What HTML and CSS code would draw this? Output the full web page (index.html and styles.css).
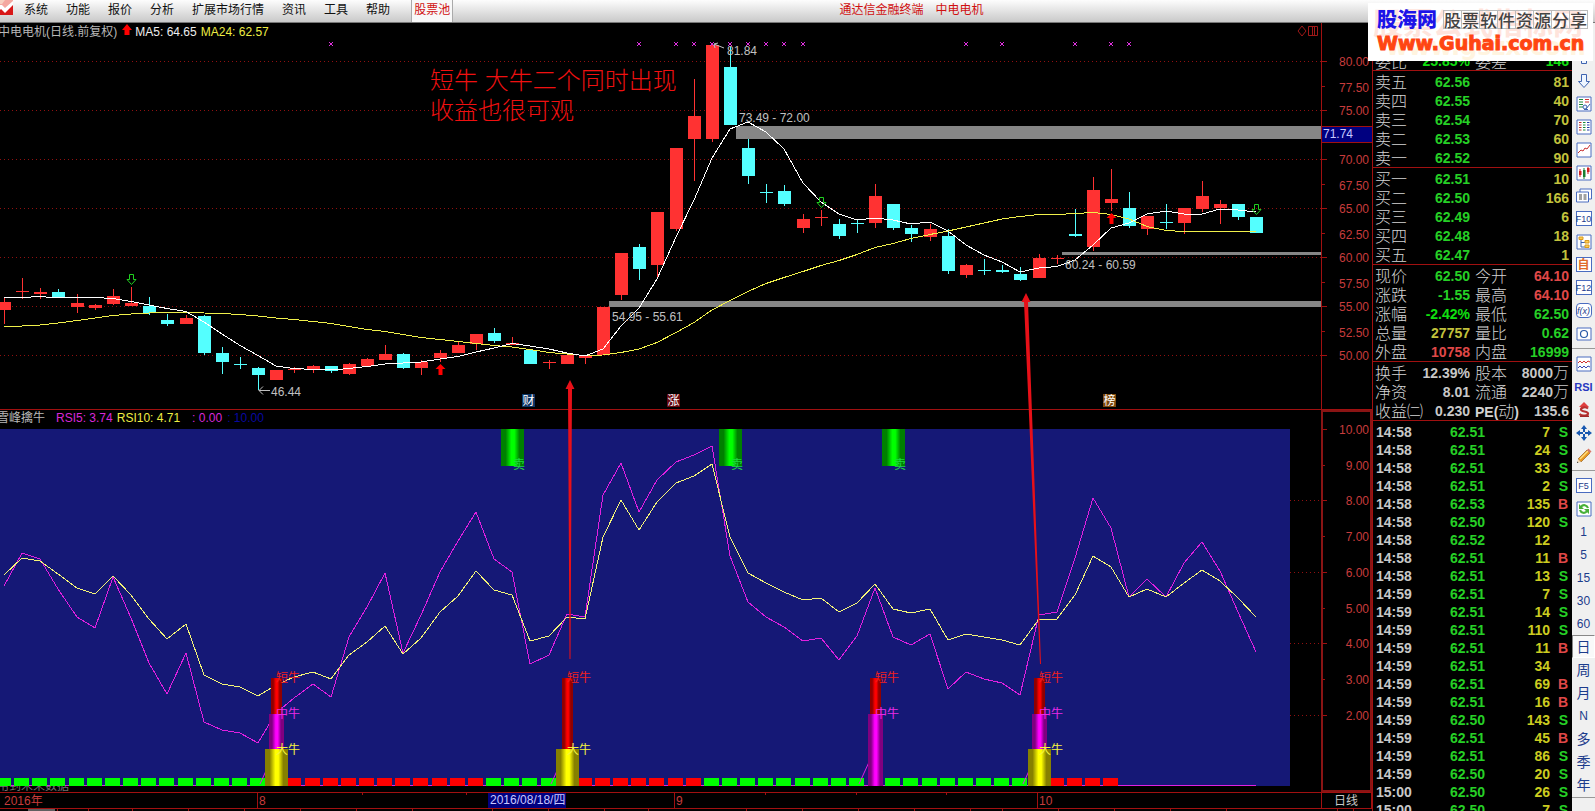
FILE: index.html
```html
<!DOCTYPE html>
<html lang="zh-CN">
<head>
<meta charset="utf-8">
<title>通达信金融终端 中电电机</title>
<link rel="stylesheet" href="styles.css">
</head>
<body>
<header class="topbar">
  <svg class="logo" viewBox="0 0 13 16" aria-hidden="true"><path fill="#d81818" d="M0 0h13v15H0z"/><path fill="#f4a8a0" d="M0 0h13v3L5 10 2 7 0 8z"/><path fill="#fff" d="M0 5l2 0 3 3 8-7v4L5 13 1 9 0 10z"/><path fill="#f7d0c0" d="M0 0h5L2 4H0z"/></svg>
  <nav class="menu">
    <a href="#">系统</a><a href="#">功能</a><a href="#">报价</a><a href="#">分析</a><a href="#">扩展市场行情</a><a href="#">资讯</a><a href="#">工具</a><a href="#">帮助</a><a href="#" class="pool">股票池</a>
  </nav>
  <h1 class="app-title"><span>通达信金融终端</span><span>中电电机</span></h1>
  <aside class="banner">
    <span class="banner-ghost">股票公式指标网</span>
    <span class="banner-ghost-url">www.gszx.com</span>
    <div class="banner-row"><b class="banner-name">股海网</b><span class="banner-tag"><i>股</i><i>票</i><i>软</i><i>件</i><i>资</i><i>源</i><i>分</i><i>享</i></span></div>
    <div class="banner-url">Www.Guhai.com.cn</div>
  </aside>
</header>
<main class="workspace">
  <section class="charts">
    <div class="legend">
      <span class="legend-name">中电电机(日线.前复权)</span>
      <svg class="legend-arrow" viewBox="0 0 10 12" aria-hidden="true"><path fill="#f00" d="M5 0l5 6H7.500v5h-5V6H0z"/></svg>
      <span class="white">MA5: 64.65</span><span class="yellow">MA24: 62.57</span>
      <svg class="legend-tools" viewBox="0 0 22 12" aria-hidden="true"><path fill="none" stroke="#a01818" d="M5 1l4 5-4 5-4-5zM11.500 1.500h9v9h-9zM15.500 1.500v9M17.500 1.500v9"/></svg>
      <span class="axis-cap"></span>
    </div>
    <svg id="price" class="plot" viewBox="0 41 1372 368" role="img" aria-label="日线"></svg>
    <div class="legend lower">
      <span class="legend-name clipped">雪峰擒牛</span>
      <span class="magenta">RSI5: 3.74</span><span class="yellow">RSI10: 4.71</span><span class="magenta zero">: 0.00</span><span class="navy">: 10.00</span>
      <span class="axis-cap strong"></span>
    </div>
    <svg id="rsi" class="plot" viewBox="0 429 1372 363" role="img" aria-label="雪峰擒牛"></svg>
    <svg id="dates" class="plot" viewBox="0 792 1372 19" role="img" aria-label="日期"></svg>
  </section>

  <section class="quotes">
    <table class="quote first"><colgroup><col class="c1"><col class="c2"><col class="c3"><col></colgroup>
      <tr><th>委比</th><td class="up">25.85%</td><th>委差</th><td class="up">146</td></tr>
    </table>
    <table class="quote"><colgroup><col class="c1"><col class="c2"><col class="c3"><col></colgroup>
      <tr><th>卖五</th><td class="dn">62.56</td><td></td><td class="vol">81</td></tr>
      <tr><th>卖四</th><td class="dn">62.55</td><td></td><td class="vol">40</td></tr>
      <tr><th>卖三</th><td class="dn">62.54</td><td></td><td class="vol">70</td></tr>
      <tr><th>卖二</th><td class="dn">62.53</td><td></td><td class="vol">60</td></tr>
      <tr><th>卖一</th><td class="dn">62.52</td><td></td><td class="vol">90</td></tr>
    </table>
    <table class="quote"><colgroup><col class="c1"><col class="c2"><col class="c3"><col></colgroup>
      <tr><th>买一</th><td class="dn">62.51</td><td></td><td class="vol">10</td></tr>
      <tr><th>买二</th><td class="dn">62.50</td><td></td><td class="vol">166</td></tr>
      <tr><th>买三</th><td class="dn">62.49</td><td></td><td class="vol">6</td></tr>
      <tr><th>买四</th><td class="dn">62.48</td><td></td><td class="vol">18</td></tr>
      <tr><th>买五</th><td class="dn">62.47</td><td></td><td class="vol">1</td></tr>
    </table>
    <table class="quote"><colgroup><col class="c1"><col class="c2"><col class="c3"><col></colgroup>
      <tr><th>现价</th><td class="dn">62.50</td><th>今开</th><td class="hot">64.10</td></tr>
      <tr><th>涨跌</th><td class="dn">-1.55</td><th>最高</th><td class="hot">64.10</td></tr>
      <tr><th>涨幅</th><td class="up">-2.42%</td><th>最低</th><td class="dn">62.50</td></tr>
      <tr><th>总量</th><td class="vol">27757</td><th>量比</th><td class="dn">0.62</td></tr>
      <tr><th>外盘</th><td class="hot">10758</td><th>内盘</th><td class="dn">16999</td></tr>
    </table>
    <table class="quote"><colgroup><col class="c1"><col class="c2"><col class="c3"><col></colgroup>
      <tr><th>换手</th><td>12.39%</td><th>股本</th><td>8000<span class="unit">万</span></td></tr>
      <tr><th>净资</th><td>8.01</td><th>流通</th><td>2240<span class="unit">万</span></td></tr>
      <tr><th>收益㈡</th><td>0.230</td><th><b>PE(</b>动<b>)</b></th><td>135.6</td></tr>
    </table>
    <table class="ticks"><colgroup><col class="t1"><col class="t2"><col class="t3"><col></colgroup>
      <tr><td>14:58</td><td>62.51</td><td>7</td><td class="s">S</td></tr>
      <tr><td>14:58</td><td>62.51</td><td>24</td><td class="s">S</td></tr>
      <tr><td>14:58</td><td>62.51</td><td>33</td><td class="s">S</td></tr>
      <tr><td>14:58</td><td>62.51</td><td>2</td><td class="s">S</td></tr>
      <tr><td>14:58</td><td>62.53</td><td>135</td><td class="b">B</td></tr>
      <tr><td>14:58</td><td>62.50</td><td>120</td><td class="s">S</td></tr>
      <tr><td>14:58</td><td>62.52</td><td>12</td><td></td></tr>
      <tr><td>14:58</td><td>62.51</td><td>11</td><td class="b">B</td></tr>
      <tr><td>14:58</td><td>62.51</td><td>13</td><td class="s">S</td></tr>
      <tr><td>14:59</td><td>62.51</td><td>7</td><td class="s">S</td></tr>
      <tr><td>14:59</td><td>62.51</td><td>14</td><td class="s">S</td></tr>
      <tr><td>14:59</td><td>62.51</td><td>110</td><td class="s">S</td></tr>
      <tr><td>14:59</td><td>62.51</td><td>11</td><td class="b">B</td></tr>
      <tr><td>14:59</td><td>62.51</td><td>34</td><td></td></tr>
      <tr><td>14:59</td><td>62.51</td><td>69</td><td class="b">B</td></tr>
      <tr><td>14:59</td><td>62.51</td><td>16</td><td class="b">B</td></tr>
      <tr><td>14:59</td><td>62.50</td><td>143</td><td class="s">S</td></tr>
      <tr><td>14:59</td><td>62.51</td><td>45</td><td class="b">B</td></tr>
      <tr><td>14:59</td><td>62.51</td><td>86</td><td class="s">S</td></tr>
      <tr><td>14:59</td><td>62.50</td><td>20</td><td class="s">S</td></tr>
      <tr><td>15:00</td><td>62.50</td><td>26</td><td class="s">S</td></tr>
      <tr><td>15:00</td><td>62.50</td><td>7</td><td class="s">S</td></tr>
    </table>
  </section>

  <nav class="tools">
    <button aria-label="上移"><svg viewBox="0 0 16 16"><path class="ol" d="M8 1.500l5.500 6H10.500v6h-5v-6H2.500z"/></svg></button>
    <button aria-label="下移"><svg viewBox="0 0 16 16"><path class="ol" d="M8 14.500l5.500-6H10.500v-7h-5v7H2.500z"/></svg></button>
    <button aria-label="自选"><svg viewBox="0 0 16 16"><path class="fr" d="M1 1h14v14H1z"/><path stroke="#1a8a3a" d="M3 3.500h4M3 6h4M3 8.500h4M3 11h4"/><path stroke="#d03030" d="M9 3.500h4M9 6h4"/><circle class="ol" cx="9" cy="11" r="2"/><path class="ol" d="M10 13l4-5M8 13.500h4"/></svg></button>
    <button aria-label="行情"><svg viewBox="0 0 16 16"><path class="fr" d="M1 1h14v14H1z"/><path stroke="#c02828" d="M3 3.500h2.500M3 6h2.500M3 8.500h2.500M3 11h2.500"/><path stroke="#188838" d="M7 3.500h2.500M7 6h2.500M7 8.500h2.500M7 11h2.500"/><path stroke="#2438a8" d="M11 3.500h2.500M11 6h2.500M11 8.500h2.500M11 11h2.500"/></svg></button>
    <button aria-label="分时"><svg viewBox="0 0 16 16"><path class="fr" d="M1 1h14v14H1z"/><path fill="none" stroke="#c83030" d="M2 11l3-3 2 1 2-3 2 1 3-4"/></svg></button>
    <button aria-label="K线"><svg viewBox="0 0 16 16"><path class="fr" d="M1 1h14v14H1z"/><path stroke="#d02020" d="M4 4v8M12 2v7"/><path stroke="#188030" d="M8 3v11"/><path fill="#d02020" d="M3 6h2.500v4H3zM11 3h2.500v4H11z"/><path fill="#188030" d="M7 5h2.500v7H7z"/></svg></button>
    <button aria-label="多窗口"><svg viewBox="0 0 16 16"><path class="fr" d="M4 1h11.500v10H4z"/><path class="fr" d="M.5 4h12v10H.5z"/><path stroke="#444" d="M3 7h3M7.500 7h3M3 9h3M7.500 9h3M3 11h3M7.500 11h3"/></svg></button>
    <button class="boxed">F10</button>
    <button aria-label="结构"><svg viewBox="0 0 16 16"><path class="fr" d="M1 1h14v14H1z"/><path fill="none" stroke="#3f64b0" d="M5 5v8h4M5 8.500h4"/><path fill="#ffd050" stroke="#d89820" d="M3 3h4v2.500H3zM9 6.500h4V9H9zM9 11h4v2.500H9z"/></svg></button>
    <button class="boxed orange">自</button>
    <button class="boxed">F12</button>
    <button class="boxed round"><i>f(x)</i></button>
    <button aria-label="画圈"><svg viewBox="0 0 16 16"><path class="fr" d="M1 2h14v12H1z"/><circle cx="8" cy="8" r="3.500" fill="none" stroke="#2858a8" stroke-width="1.200"/></svg></button>
    <hr>
    <button aria-label="指标"><svg viewBox="0 0 16 16"><path class="fr" d="M1 1h14v14H1z"/><path fill="none" stroke="#d03030" d="M2 7l2-2 2 2 2-2 2 2 2-2 2 1"/><path fill="none" stroke="#3848b8" d="M2 12l2-2 2 2 2-2 2 2 2-2 2 1"/></svg></button>
    <button class="rsi">RSI</button>
    <button aria-label="除权"><svg viewBox="0 0 16 16"><path fill="#e04040" d="M8 0l5 5H3z"/><path fill="none" stroke="#b83030" stroke-width="2.200" d="M12 6.500C10 4.500 5 5 5 7.500s7 1.500 7 4-6 3-8.500.5"/><path fill="#a02828" d="M4 13.500h9V15H4z"/></svg></button>
    <button aria-label="移动"><svg viewBox="0 0 16 16"><path fill="#1858b0" d="M8 0l3 4H9v3h3V5l4 3-4 3V9H9v3h2l-3 4-3-4h2V9H4v2L0 8l4-3v2h3V4H5z"/><path fill="#f0f0f0" d="M7 7h2v2H7z"/></svg></button>
    <button aria-label="画线"><svg viewBox="0 0 16 16"><path fill="#e89820" stroke="#8a5010" stroke-width=".6" d="M2 11L11 2l3 3-9 9z"/><path stroke="#ffe080" stroke-width="1.500" d="M4 11l8-8"/><path fill="#f4d8b0" d="M2 11l3 3-4 1z"/><path fill="#333" d="M1 13.500l1.500 1L1 15z"/><path fill="#d87868" d="M11 2l1.500-1.500 3 3L14 5z"/></svg></button>
    <hr>
    <button class="boxed">F5</button>
    <button aria-label="刷新"><svg viewBox="0 0 16 16"><path class="fr" d="M1 1h14v14H1z"/><path fill="none" stroke="#48b038" stroke-width="2.200" d="M12 7c-1-3-5-4-7-1M4 9c1 3 5 4 7 1"/><path fill="#48b038" d="M3 3v5h5zM13 13V8H8z"/></svg></button>
    <button>1</button><button>5</button><button>15</button><button>30</button><button>60</button>
    <button class="period on">日</button><button class="period">周</button><button class="period">月</button><button>N</button><button class="period">多</button><button class="period">季</button><button class="period">年</button>
    <hr class="end">
  </nav>
</main>
<script src="chart.js"></script>
</body>
</html>
```

FILE: styles.css
```css
* { box-sizing: border-box; }
body {
  margin: 0;
  height: 100vh;
  overflow: hidden;
  display: flex;
  flex-direction: column;
  background: #000;
  color: #c8c8c8;
  font: 12px/16px "Liberation Sans", "Noto Sans CJK SC", sans-serif;
}
.topbar {
  position: relative;
  flex: none;
  display: flex;
  height: 23px;
  padding-right: 225px;
  background: linear-gradient(#fdfdfd, #c9c9c9);
  border-bottom: 1px solid #777;
}
.logo { width: 13px; height: 16px; }
.menu { display: flex; gap: 18px; padding-left: 11px; line-height: 20px; }
.menu a { color: #111; text-decoration: none; }
.menu .pool {
  margin-left: 3px;
  padding: 0 2px;
  border: solid #aaa;
  border-width: 0 1px;
  background: #f8f8f8;
  color: #d01010;
}
.app-title {
  flex: 1;
  display: flex;
  justify-content: center;
  gap: 12px;
  margin: 0;
  font-size: 12px;
  font-weight: 400;
  line-height: 20px;
  color: #d01010;
}
.banner {
  position: absolute;
  z-index: 2;
  top: 3px;
  right: 2px;
  width: 225px;
  height: 58px;
  padding: 4px 4px 0 9px;
  overflow: hidden;
  background: #fff;
}
.banner-ghost, .banner-ghost-url { position: absolute; left: 5px; font-weight: 700; white-space: nowrap; }
.banner-ghost { top: 5px; font-size: 30px; line-height: 32px; color: #ffe4dc; }
.banner-ghost-url { top: 32px; left: 18px; font: 700 24px/24px "DejaVu Sans", sans-serif; color: #fff4e0; }
.banner-row { position: relative; display: flex; justify-content: space-between; align-items: center; height: 24px; }
.banner-name { font: 900 20px/22px "Noto Sans CJK SC", sans-serif; color: #1c14e8; }
.banner-tag { display: flex; margin-right: 1px; border: 1px solid #bbb; border-right: 0; }
.banner-tag i { width: 18px; border-right: 1px solid #bbb; font: 500 17px/17px "Noto Sans CJK SC", sans-serif; color: #444; }
.banner-url { position: relative; font: 700 19px/24px "DejaVu Sans", sans-serif; color: #ff4512; -webkit-text-stroke: 1px #ff4512; white-space: nowrap; }

.workspace { flex: 1; min-height: 0; display: grid; grid-template-columns: minmax(0, 1fr) 200px 23px; }
.charts { overflow: hidden; }
.plot { display: block; width: 100%; height: auto; font: 12px "Liberation Sans", "Noto Sans CJK SC", sans-serif; }
#rsi { overflow: visible; }
.legend { display: flex; height: 18px; white-space: nowrap; line-height: 18px; }
.lower { height: 20px; border-top: 1px solid #a01010; line-height: 16px; }
.legend-arrow { width: 10px; height: 12px; margin: 1px 3px 0 5px; }
.legend-name { margin-left: -2px; color: #b8b8b8; }
.clipped { margin: 0 11px 0 -3px; }
.white { color: #eee; }
.yellow { color: #ee4; margin-left: 4px; }
.magenta { color: #d828d8; }
.zero { margin-left: 12px; }
.navy { color: #0808a0; margin-left: 5px; }
.legend-tools { width: 22px; height: 12px; margin: 2px 2px 0 auto; }
.axis-cap { width: 51px; border-left: 1px solid #a01010; }
.lower .axis-cap { margin-left: auto; }
.strong { border: 2px solid #8a1414; border-bottom: 0; }

.quotes { overflow: hidden; border-left: 1px solid #a01010; }
.quote, .ticks { width: 100%; table-layout: fixed; border-collapse: separate; border-spacing: 0; border-top: 1px solid #a01010; padding: 1px 3px 0 2px; }
.quote.first { border-top: 0; height: 47px; padding-top: 30px; }
.quote tr { height: 19px; }
.quote th { padding: 0; font: 300 16px/19px "Noto Sans CJK SC", sans-serif; text-align: left; white-space: nowrap; color: #d4d4d4; }
.quote th b { font: 700 14px/14px "Liberation Sans", sans-serif; }
.quote th:nth-child(3) { padding-left: 5px; }
.quote td, .ticks td { padding: 0; font: 700 14px/18px "Liberation Sans", sans-serif; text-align: right; white-space: nowrap; }
.unit { font: 300 16px/14px "Noto Sans CJK SC", sans-serif; }
.quote.first tr { height: 17px; }
.quote.first th, .quote.first td { line-height: 17px; }
.c1 { width: 46px; }
.c2 { width: 49px; }
.c3 { width: 46px; }
.ticks { padding: 2px 4px 0 3px; }
.ticks tr { height: 18px; }
.ticks td:first-child { text-align: left; }
.ticks td:nth-child(2) { color: #26d026; }
.ticks td:nth-child(3) { color: #cccc20; }
.t1 { width: 50px; }
.t2 { width: 59px; }
.t3 { width: 65px; }
.up { color: #10e010; }
.dn, .ticks .s { color: #26d026; }
.vol { color: #c2c23c; }
.hot, .ticks .b { color: #e04848; }

.tools { display: flex; flex-direction: column; align-items: stretch; padding-top: 23px; overflow: hidden; background: #f0f0f0; }
.tools button {
  flex: none;
  display: flex;
  align-items: center;
  justify-content: center;
  height: 23px;
  padding: 0;
  border: 0;
  background: none;
  color: #1c3c8c;
  font: 12px/14px "Liberation Sans", "Noto Sans CJK SC", sans-serif;
}
.tools svg { width: 16px; height: 16px; fill: none; }
.tools .ol { fill: #eef6ff; stroke: #3f64b0; }
.tools .fr { fill: #fff; stroke: #4a6cc0; }
.tools .boxed { align-self: center; width: 16px; height: 15px; margin: 4px 0; border: 1px solid #4a6cc0; background: #fff; font-size: 9px; line-height: 12px; }
.tools .round { border-radius: 4px; }
.tools .orange { border-color: #4a6cc0; color: #e06828; font-size: 12px; font-weight: 700; }
.tools .rsi { font-size: 11px; font-weight: 700; color: #2838c0; }
.tools .period { font-size: 14px; }
.tools .on { border: 1px solid #fff; border-top-color: #888; border-left-color: #888; background: #f9f9f9; }
.tools hr { flex: none; width: 100%; height: 1px; margin: 3px 0; border: 0; background: #999; }
.tools .end { margin: 1px 0; }
```

FILE: chart.js
```js
const NS = "http://www.w3.org/2000/svg";
const X0 = 4.5, STEP = 18.15;
const x = i => Math.floor(X0 + STEP * i);
const RED = "#ff3232", CYAN = "#54ffff", AXIS = "#a01010", LABEL = "#c83c3c";

function add(parent, name, attrs, text) {
  const el = document.createElementNS(NS, name);
  for (const k in attrs) el.setAttribute(k, attrs[k]);
  if (text !== undefined) el.textContent = text;
  parent.appendChild(el);
  return el;
}
const rect = (p, l, t, w, h, fill) => add(p, "rect", { x: l, y: t, width: w, height: h, fill, "shape-rendering": "crispEdges" });
const text = (p, l, t, s, fill, extra) => add(p, "text", Object.assign({ x: l, y: t, fill }, extra), s);
const line = (p, values, stroke) => add(p, "polyline", {
  points: values.map((v, i) => x(i) + "," + v).join(" "), fill: "none", stroke, "stroke-width": 1, "shape-rendering": "crispEdges" });
const dots = (p, x1, x2, y) => add(p, "line", { x1, x2, y1: y + .5, y2: y + .5, stroke: "#901010", "stroke-dasharray": "1 3", "shape-rendering": "crispEdges" });

// [colour, body top, body bottom, wick top, wick bottom]
const candles = [
  "r 302 310 297 324","r 291 292 278 299","r 292 294 288 299","c 292 297 289 297","r 303 307 294 313","r 305 308 304 310",
  "r 296 304 289 305","r 303 306 287 306","c 306 313 297 315","c 320 324 314 326","r 318 324 315 324","c 316 353 315 355",
  "c 353 362 347 374","c 364 365 357 369","c 368 375 367 390","r 370 380 370 380","r 369 370 367 373","r 366 369 365 373",
  "c 366 371 366 373","r 364 374 363 375","r 359 366 358 366","r 354 360 345 360","c 354 368 353 369","r 362 368 360 375",
  "r 353 358 350 362","r 345 353 341 353","r 334 344 334 350","c 333 341 328 343","r 343 345 337 345","c 350 364 350 364",
  "r 362 363 360 369","r 355 364 355 364","r 356 358 356 364","r 307 355 307 355","r 253 295 253 300","c 247 269 244 280",
  "r 212 265 212 278","r 148 229 148 231","r 116 139 79 181","r 45 139 45 142","c 67 125 47 125","c 148 176 139 184",
  "c 192 193 184 203","c 191 204 185 206","r 219 228 214 233","r 217 218 210 226","c 224 236 219 239","c 223 224 219 233",
  "r 196 223 184 228","c 204 228 204 230","c 228 234 225 242","r 229 237 224 241","c 236 271 229 274","r 265 275 264 278",
  "c 270 271 259 275","c 270 272 265 273","c 274 280 267 281","r 258 278 254 278","r 258 259 255 264","c 234 236 209 237",
  "r 190 247 177 251","r 199 203 169 211","c 208 226 192 228","r 216 229 216 235","c 222 223 204 229","r 208 223 208 234",
  "r 196 209 181 212","r 204 208 200 224","c 204 217 204 220","c 217 233 217 233"
];
const ma5 = [297.5,297.5,296.5,298,297.5,297.5,298.5,301.5,305,308.5,311.5,322,334,345.5,355.5,366,368.5,369.5,370,368.5,366.5,364,363,362,359,356.5,352,348,343.5,346,349,353,356,349,326,308,279,237,200,158,129,122,132,149,183,202,214,220,218,220,224,222,231,245,255,262,272,268,266.5,260,245,228,223,214,211,214,214,209,210,212];
const ma24 = [327,326,325,323,320.5,318,315.5,314,313,312.5,312.5,313,313.5,314.5,316,318,319.5,321.5,323.5,326.5,329.5,331.5,334.5,337.5,339.5,341.5,343.5,345.5,347,349.5,352.5,354,355.5,355,352.5,349,342.5,332.5,322.5,310,300.5,291.5,283.5,277.5,271.5,265.5,260.5,254.5,247.5,243.5,238.5,234.5,231,227,223,219,216.5,214.5,214.5,213.5,212.5,214.5,219,226.5,230.5,231.5,231.5,231.5,231.5,232];
const rsi10 = [575,558,561,574,588,594,576,595,619,639,624,675,684,687,696,685,677,672,679,655,642,626,654,638,612,596,571,590,595,641,636,617,619,537,500,530,502,483,476,464,537,573,583,592,600,598,612,603,584,609,613,609,640,634,637,640,645,619,619,595,556,567,597,589,597,583,570,581,598,617];
const rsi5 = [586,553,559,589,617,628,577,618,663,694,653,722,730,733,743,713,698,684,697,637,607,573,653,615,572,541,512,559,572,664,655,614,617,495,463,512,480,462,455,446,556,602,617,627,641,638,660,636,588,637,645,634,689,672,679,683,695,615,612,558,498,528,597,579,597,563,542,571,612,652];

/* price pane */
const price = document.getElementById("price");
for (let v = 80; v >= 50; v -= 5) dots(price, 0, 1321, Math.round(61 + (80 - v) * 9.8));
rect(price, 736, 126, 585, 13, "#868686");
rect(price, 609, 301, 712, 6, "#868686");
rect(price, 1062, 252, 259, 3, "#868686");
candles.forEach((c, i) => {
  const [k, t, b, wt, wb] = c.split(" ");
  const fill = k === "r" ? RED : CYAN;
  rect(price, x(i), wt, 1, wb - wt, fill);
  rect(price, x(i) - 6, t, 13, b - t, fill);
});
line(price, ma24, "#f0f04a");
line(price, ma5, "#fff");
[18,35,37,38,39,40,41,42,43,44,53,55,59,61,62].forEach(i =>
  add(price, "path", { d: `M${x(i) - 2} 42l4 4m0-4l-4 4`, stroke: "#e030e0" }));
[[7,274],[45,197],[69,204]].forEach(([i, t]) =>
  add(price, "path", { d: `M${x(i) - 1.5} ${t + .5}h4v5h2.500l-4.500 5-4.500-5h2.500z`, fill: "none", stroke: "#20d020" }));
[[24,364],[61,213]].forEach(([i, t]) =>
  add(price, "path", { d: `M${x(i) + .5} ${t}l5 5h-3v6h-4v-6h-3z`, fill: "#f00" }));
text(price, 727, 55, "81.84", "#c0c0c0");
add(price, "path", { d: "M724 48l-10-4m1 4l-1-4 4-1", fill: "none", stroke: "#c0c0c0" });
text(price, 739, 122, "73.49 - 72.00", "#c0c0c0");
text(price, 612, 321, "54.95 - 55.61", "#c0c0c0");
text(price, 1065, 269, "60.24 - 60.59", "#c0c0c0");
text(price, 271, 396, "46.44", "#c0c0c0");
add(price, "path", { d: "M270 390.500h-11m4-4l-4 4 4 4", fill: "none", stroke: "#c0c0c0" });
text(price, 430, 89, "短牛 大牛二个同时出现", "#f01010", { "font-size": 24, "font-weight": 300 });
text(price, 430, 119, "收益也很可观", "#f01010", { "font-size": 24, "font-weight": 300 });
[[522,"财","#0c3464"],[667,"涨","#640810"],[1103,"榜","#7c480c"]].forEach(([l, s, fill]) => {
  rect(price, l, 394, 13, 13, fill);
  text(price, l + 6.5, 405, s, "#fff", { "text-anchor": "middle" });
});
rect(price, 1321, 41, 1, 368, AXIS);
for (let v = 80; v >= 50; v -= 2.5) {
  const y = Math.round(61 + (80 - v) * 9.8), major = v % 5 === 0;
  rect(price, 1322, y, major ? 5 : 3, 1, AXIS);
  if (v !== 72.5) text(price, 1369, y + (major ? 5 : 6), v.toFixed(2), LABEL, { "text-anchor": "end" });
}
rect(price, 1321, 126, 51, 17, AXIS);
rect(price, 1322, 127, 50, 15, "#000080");
text(price, 1323, 138, "71.74", "#c8c8ff");

/* indicator pane */
const rsi = document.getElementById("rsi");
const defs = add(rsi, "defs", {});
[["gy","#868000","#ffff00"],["gm","#800080","#ff00ff"],["gr","#900000","#ff0000"],["gg","#008000","#00ff00"]].forEach(([id, a, b]) => {
  const g = add(defs, "linearGradient", { id });
  [[0,a],[.2,a],[.45,b],[.58,b],[.8,a],[1,a]].forEach(([offset, c]) => add(g, "stop", { offset, "stop-color": c }));
});
text(rsi, -3, 790, "用到未来数据", "#707070");
for (let v = 8; v >= 2; v -= 2) dots(rsi, 1290, 1321, Math.round(786 - v * 35.7));
rect(rsi, 0, 429, 1290, 357, "#151876");
rect(rsi, 0, 785, 1256, 1, "#e020e0");
line(rsi, rsi5, "#e020e0");
line(rsi, rsi10, "#f4f478");
for (let i = 0; i <= 61; i++) {
  const red = (i > 14 && i < 27) || (i > 30 && i < 39) || i > 56;
  if (i !== 48) rect(rsi, x(i) - 8, 778, 15, 8, red ? "#f00" : "#0f0");
}
[28, 40, 49].forEach(i => {
  rect(rsi, x(i) - 11, 429, 23, 37, "url(#gg)");
  text(rsi, x(i) + 1, 469, "卖", "#20d840");
});
[[15,1,1],[31,0,1],[48,1,0],[57,1,1]].forEach(([i, mid, big]) => {
  add(rsi, "path", { d: `M${x(i) - 16} 784L${x(i)} 749`, stroke: "#e020e0" });
  rect(rsi, x(i) - 5, 678, 11, mid ? 36 : 71, "url(#gr)");
  if (mid) rect(rsi, x(i) - 7, 714, 15, big ? 35 : 72, "url(#gm)");
  if (big) rect(rsi, x(i) - 11, 749, 23, 37, "url(#gy)");
  text(rsi, x(i), 682, "短牛", "#f02020");
  if (mid) text(rsi, x(i), 718, "中牛", "#e828e8");
  if (big) text(rsi, x(i), 754, "大牛", "#f4f440");
});
rect(rsi, 1321, 429, 2, 363, "#8a1414");
rect(rsi, 1370, 429, 2, 363, "#8a1414");
rect(rsi, 1321, 790, 51, 2, "#8a1414");
for (let v = 10; v >= 2; v--) {
  const y = Math.round(786 - v * 35.7);
  rect(rsi, 1323, y, v % 2 ? 2 : 4, 1, AXIS);
  text(rsi, 1369, v === 10 ? 434 : y + 5, v.toFixed(2), LABEL, { "text-anchor": "end" });
}

/* red pointers cross from the indicator into the price pane */
add(rsi, "path", { d: "M570 380l4.500 9h-2.500L570.500 659h-1L568 389h-2.500z", fill: "#e81018" });
add(rsi, "path", { d: "M1026 293l4.500 9h-2.500L1041 664h-1L1024 302h-2.500z", fill: "#e81018" });

/* date axis */
const dates = document.getElementById("dates");
rect(dates, 0, 792, 1372, 1, AXIS);
rect(dates, 0, 808, 1372, 1, AXIS);
[257, 674, 1037, 1321, 1371].forEach(l => rect(dates, l, 792, 1, 16, AXIS));
[362, 466, 765, 856, 946].forEach(l => rect(dates, l, 793, 1, 2, AXIS));
[57,88,132,188,244,300,356,412,492,548,604,648,746,802,858,914,970,1002,1058,1114,1170,1226,1337,1353].forEach(l => rect(dates, l, 809, 1, 2, AXIS));
rect(dates, 28, 809, 27, 2, "#606060");
rect(dates, 488, 793, 78, 15, "#000080");
text(dates, 4, 805, "2016年", LABEL);
text(dates, 259, 805, "8", LABEL);
text(dates, 676, 805, "9", LABEL);
text(dates, 1039, 805, "10", LABEL);
text(dates, 490, 804, "2016/08/18/四", "#c8c8ff");
text(dates, 1346, 805, "日线", "#c8c8c8", { "text-anchor": "middle" });
```
